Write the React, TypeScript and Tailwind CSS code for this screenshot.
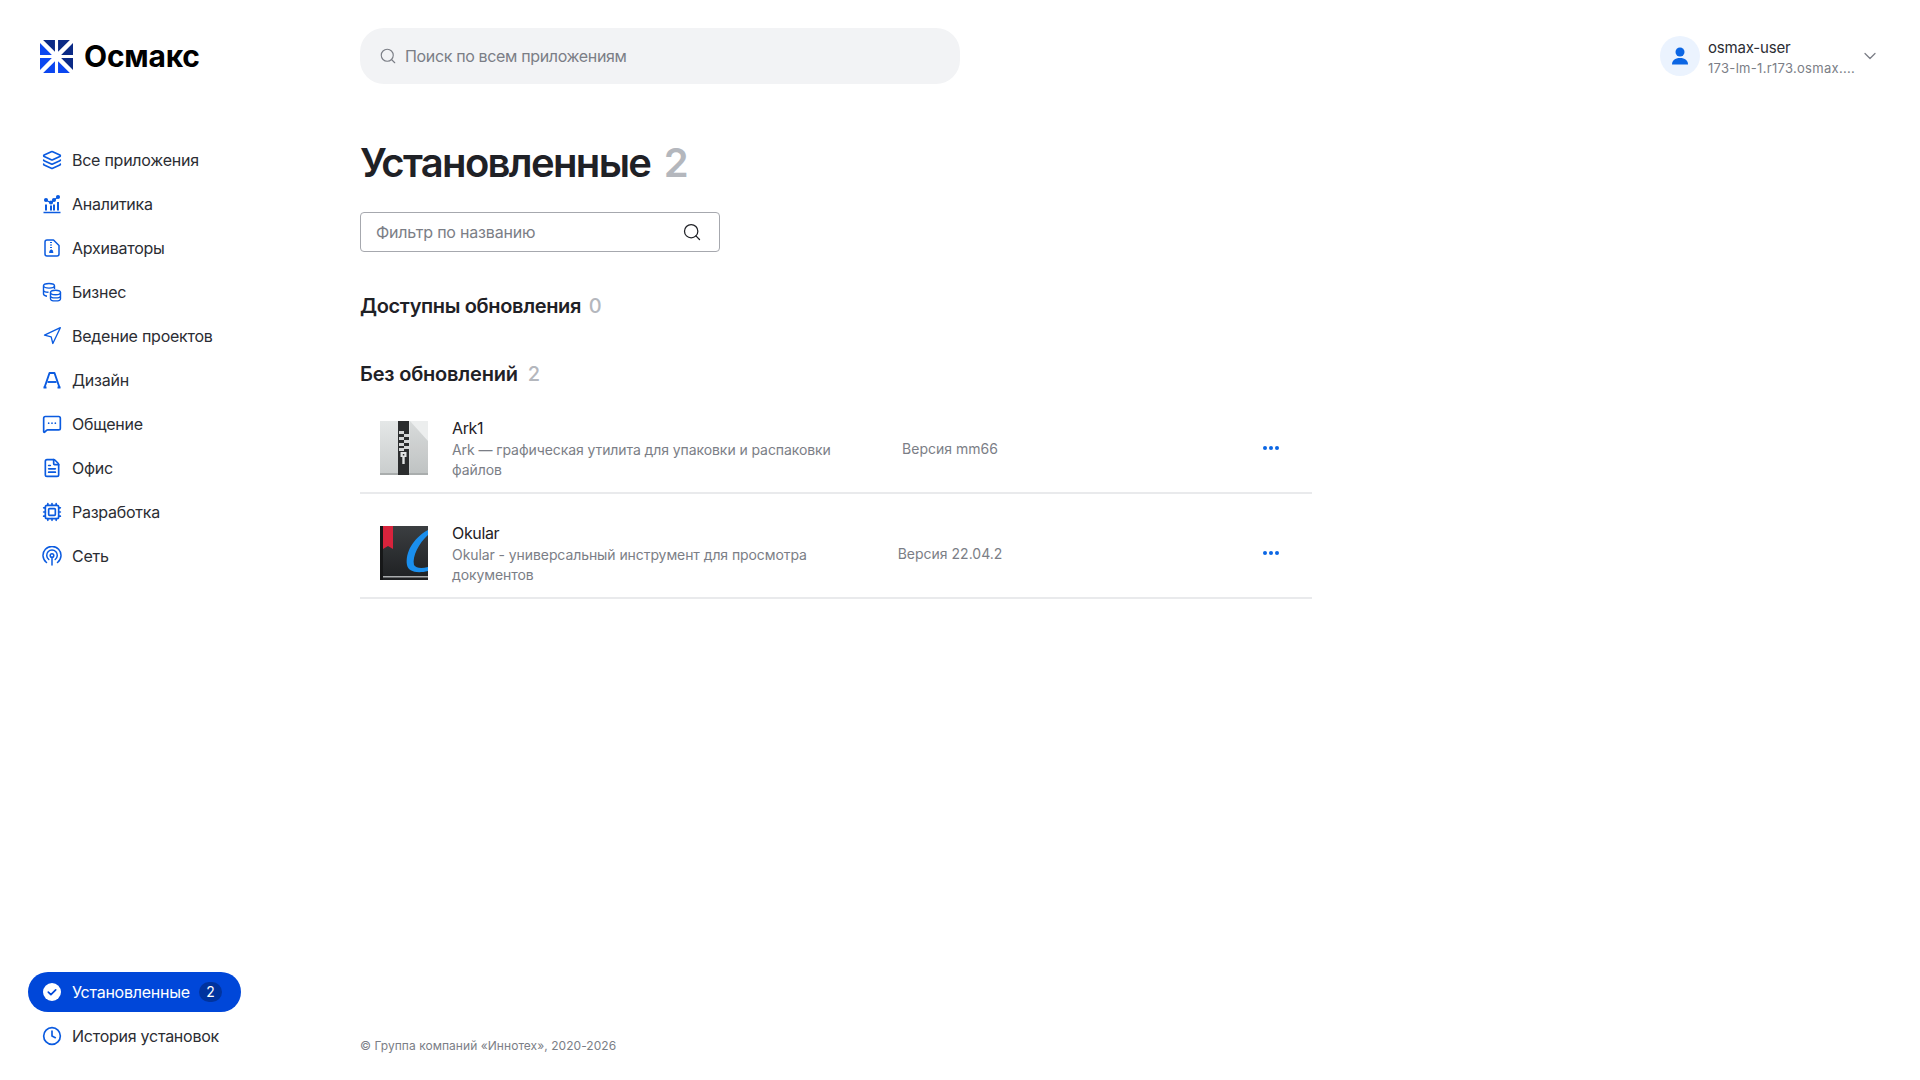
import * as React from 'react';
import {
  ChevronDown,
  Clock,
  Cpu,
  FileText,
  Layers,
  MessageSquareMore,
  Navigation,
  Search,
} from 'lucide-react';

type IconProps = { className?: string };

const Logo = () => (
  <svg width="33" height="33" viewBox="0 0 32 32" className="shrink-0">
    <path d="M3 0h11.500v11.500zM17.500 0H29L17.500 11.500zM32 3v11.500H20.500zM20.500 17.500H32V29z" fill="#0b2a86" />
    <path d="M0 3l11.500 11.500H0zM0 17.500h11.500L0 29zM3 32l11.500-11.500V32zM17.500 20.500L29 32H17.500z" fill="#0b46f0" />
  </svg>
);

const ChartIcon = ({ className }: IconProps) => (
  <svg viewBox="0 0 20 20" fill="none" stroke="currentColor" strokeWidth="1.500" className={className}>
    <path d="M1.500 18.500h17" />
    <path d="M4 16.500v-6M9 16.500v-5M12 16.500v-6M16 16.500V8" strokeWidth="2" />
    <path d="M4 6l5 3 3-3 4-3" strokeWidth="1.200" />
    <circle cx="4" cy="6" r="1.300" fill="currentColor" />
    <circle cx="9" cy="8.500" r="1.300" fill="currentColor" />
    <circle cx="12" cy="6" r="1.300" fill="currentColor" />
    <circle cx="16" cy="3" r="1.300" fill="currentColor" />
  </svg>
);

const ArchiveIcon = ({ className }: IconProps) => (
  <svg viewBox="0 0 20 20" fill="none" stroke="currentColor" strokeWidth="1.500" className={className}>
    <path d="M11.500 2H5a2 2 0 0 0-2 2v12a2 2 0 0 0 2 2h10a2 2 0 0 0 2-2V7.500z" strokeLinejoin="round" />
    <path d="M8 4.500h2M8 7h2M8 9.500h2" strokeWidth="1.200" />
    <path d="M7.500 14.500l1-2.500h1.500l1 2.500z" fill="currentColor" strokeWidth="1" />
  </svg>
);

const CoinsIcon = ({ className }: IconProps) => (
  <svg viewBox="0 0 20 20" fill="none" stroke="currentColor" strokeWidth="1.400" className={className}>
    <ellipse cx="7" cy="3.800" rx="5.500" ry="2.300" />
    <path d="M1.500 3.800v8.200c0 1 1.400 1.800 3.500 2.200M1.500 8c0 1.200 2 2.200 5 2.300M12.500 4v3" />
    <ellipse cx="13.500" cy="10.500" rx="5" ry="2.200" />
    <path d="M8.500 10.500v6.200c0 1.200 2.200 2.200 5 2.200s5-1 5-2.200v-6.200M8.500 13.700c0 1.200 2.200 2.200 5 2.200s5-1 5-2.200" />
  </svg>
);

const DesignIcon = ({ className }: IconProps) => (
  <svg viewBox="0 0 20 20" fill="none" stroke="currentColor" strokeWidth="1.900" strokeLinejoin="round" className={className}>
    <path d="M2.500 17.500L7.500 3h5l5 14.500" />
    <path d="M5.500 12h9" />
    <path d="M1.500 17.500h3M15.500 17.500h3" />
  </svg>
);

const SignalIcon = ({ className }: IconProps) => (
  <svg viewBox="0 0 20 20" fill="none" stroke="currentColor" strokeWidth="1.500" strokeLinecap="round" className={className}>
    <path d="M4.500 16.500a9 9 0 1 1 11 0" />
    <path d="M6.800 13.500a5.300 5.300 0 1 1 6.400 0" />
    <circle cx="10" cy="9.500" r="1.800" />
    <path d="M10 11.500V19" />
  </svg>
);

const CheckBadge = ({ className }: IconProps) => (
  <svg viewBox="0 0 20 20" className={className}>
    <circle cx="10" cy="10" r="9" fill="#fff" />
    <path d="M6.300 10.200l2.600 2.500 4.800-4.800" fill="none" stroke="#0047d9" strokeWidth="1.700" strokeLinecap="round" strokeLinejoin="round" />
  </svg>
);

const UserIcon = () => (
  <svg width="20" height="20" viewBox="0 0 20 20" fill="#0b66e4">
    <circle cx="10" cy="6" r="4.500" />
    <path d="M2 18.500c0-4 3-6.500 8-6.500s8 2.500 8 6.500z" />
  </svg>
);

const ArkIcon = () => (
  <svg width="48" height="54" viewBox="0 0 48 54" className="shrink-0">
    <defs>
      <linearGradient id="arkBg" x1="0" y1="0" x2="0" y2="1">
        <stop offset="0" stopColor="#e4e7e7" />
        <stop offset="1" stopColor="#c9cdcd" />
      </linearGradient>
    </defs>
    <rect width="48" height="54" fill="url(#arkBg)" />
    <path d="M30 0L48 20V0z" fill="#eceeee" />
    <path d="M30 0L48 20V52H30z" fill="#000" opacity=".05" />
    <rect y="52" width="48" height="2" fill="#a9adad" />
    <rect x="18" width="11" height="54" fill="#2b2d2e" />
    <path d="M19 10h5v3h-5zM24 13h5v3h-5zM19 16h5v3h-5zM24 19h5v3h-5zM19 22h5v3h-5zM24 25h5v3h-5zM19 27h5v3h-5z" fill="#d5d7d7" />
    <path d="M20.500 31h6v5h-1.800v7h-2.400v-7h-1.800z" fill="#e2e4e4" />
    <rect x="22.800" y="33" width="1.500" height="1.500" fill="#2b2d2e" />
  </svg>
);

const OkularIcon = () => (
  <svg width="48" height="54" viewBox="0 0 48 54" className="shrink-0">
    <defs>
      <linearGradient id="okBg" x1="0" y1="0" x2="0" y2="1">
        <stop offset="0" stopColor="#3b3e41" />
        <stop offset="1" stopColor="#1e2022" />
      </linearGradient>
      <clipPath id="okClip">
        <rect width="48" height="54" />
      </clipPath>
    </defs>
    <rect width="48" height="54" fill="url(#okBg)" />
    <rect width="3" height="54" fill="#161718" />
    <path d="M3 0h10v23l-5-3-5 3z" fill="#d8233c" />
    <rect x="3" y="50" width="45" height="1.500" fill="#a9acae" />
    <g clipPath="url(#okClip)">
      <path d="M48 4C33 12 25 27 27 39c1 6 9 9 21 6v-4c-7 2-12 1-14-2-2-9 5-22 14-30z" fill="#1a8fee" />
    </g>
  </svg>
);

const PlaneIcon = ({ className }: IconProps) => <Navigation className={className} strokeWidth={1.6} />;

const navItems: { label: string; icon: React.ComponentType<IconProps> }[] = [
  { label: 'Все приложения', icon: Layers },
  { label: 'Аналитика', icon: ChartIcon },
  { label: 'Архиваторы', icon: ArchiveIcon },
  { label: 'Бизнес', icon: CoinsIcon },
  { label: 'Ведение проектов', icon: PlaneIcon },
  { label: 'Дизайн', icon: DesignIcon },
  { label: 'Общение', icon: MessageSquareMore },
  { label: 'Офис', icon: FileText },
  { label: 'Разработка', icon: Cpu },
  { label: 'Сеть', icon: SignalIcon },
];

const apps = [
  {
    name: 'Ark1',
    desc: 'Ark — графическая утилита для упаковки и распаковки файлов',
    version: 'Версия mm66',
    icon: <ArkIcon />,
  },
  {
    name: 'Okular',
    desc: 'Okular - универсальный инструмент для просмотра документов',
    version: 'Версия 22.04.2',
    icon: <OkularIcon />,
  },
];

const NavRow = ({ label, icon: Icon }: { label: string; icon: React.ComponentType<IconProps> }) => (
  <div className="flex h-11 items-center pl-[42px] text-base tracking-[-0.25px] text-[#2b2d33]">
    <Icon className="h-5 w-5 shrink-0 text-[#0b5be0]" />
    <span className="ml-[10px]">{label}</span>
  </div>
);

const AppRow = ({ app }: { app: (typeof apps)[number] }) => (
  <div className="flex h-[105px] items-start border-b-2 border-[#e9eaec] pl-5 pt-[29px]">
    <div className="mt-[3px]">{app.icon}</div>
    <div className="ml-6 w-[400px]">
      <div className="text-base leading-5 tracking-[-0.35px] text-[#1f2126]">{app.name}</div>
      <div className="mt-[2px] text-sm leading-5 tracking-[-0.08px] text-[#7b7e86]">{app.desc}</div>
    </div>
    <div className="ml-[12px] w-[172px] pt-[21px] text-center text-sm leading-5 text-[#7b7e86]">{app.version}</div>
    <div className="ml-[227px] flex gap-[2px] pt-[28px]">
      <span className="h-1 w-1 rounded-full bg-[#0b66e4]" />
      <span className="h-1 w-1 rounded-full bg-[#0b66e4]" />
      <span className="h-1 w-1 rounded-full bg-[#0b66e4]" />
    </div>
  </div>
);

export default function App() {
  return (
    <div className="flex h-[1080px] w-full overflow-hidden bg-white font-['Inter',sans-serif] text-[#1f2126]">
      <aside className="flex w-[360px] shrink-0 flex-col">
        <div className="flex items-center gap-[11px] pl-[40px] pt-[39px]">
          <Logo />
          <span className="text-[30px] font-bold leading-[34px] tracking-[-0.2px] text-black">Осмакс</span>
        </div>
        <nav className="mt-[65px]">
          {navItems.map((item) => (
            <NavRow key={item.label} label={item.label} icon={item.icon} />
          ))}
        </nav>
        <div className="mt-auto pb-[22px]">
          <div className="flex h-11 items-center">
            <div className="ml-7 flex h-10 w-[213px] items-center rounded-full bg-[#0047d9] pl-[14px] text-base tracking-[-0.25px] text-white">
              <CheckBadge className="h-5 w-5 shrink-0" />
              <span className="ml-[10px]">Установленные</span>
              <span className="ml-[9px] flex h-5 w-[23px] items-center justify-center rounded-full bg-[#00339e] text-sm">2</span>
            </div>
          </div>
          <NavRow label="История установок" icon={Clock} />
        </div>
      </aside>

      <main className="flex min-w-0 flex-1 flex-col">
        <header className="flex items-center justify-between pr-[40px] pt-7">
          <div className="flex h-14 w-[600px] items-center rounded-3xl bg-[#f2f3f5] pl-[19px] text-base tracking-[-0.35px] text-[#7b7e86]">
            <Search className="h-[18px] w-[18px] text-[#7b7e86]" strokeWidth={1.5} />
            <span className="ml-[8px]">Поиск по всем приложениям</span>
          </div>
          <div className="flex items-center">
            <div className="flex h-10 w-10 items-center justify-center rounded-full bg-[#ebf3fe]">
              <UserIcon />
            </div>
            <div className="ml-2 w-[146px] pt-[3px]">
              <div className="text-[15px] leading-5 tracking-[-0.2px] text-[#2b2d33]">osmax-user</div>
              <div className="whitespace-nowrap text-[13px] leading-5 tracking-[0.3px] text-[#7b7e86]">173-lm-1.r173.osmax....</div>
            </div>
            <ChevronDown className="ml-[6px] h-5 w-5 text-[#7b7e86]" strokeWidth={1.5} />
          </div>
        </header>

        <h1 className="mt-[51px] text-[40px] font-semibold leading-[56px] tracking-[-1.65px] text-[#1f2126]">
          Установленные <span className="ml-[5px] tracking-normal text-[#b4b7bd]">2</span>
        </h1>

        <div className="mt-[21px] flex h-10 w-[360px] items-center justify-between rounded border border-[#a6a8ae] pl-[15px] pr-[17px] text-base tracking-[-0.2px] text-[#7b7e86]">
          <span>Фильтр по названию</span>
          <Search className="h-5 w-5 text-[#1f2126]" strokeWidth={1.5} />
        </div>

        <h2 className="mt-[40px] text-xl font-semibold leading-7 tracking-[-0.35px] text-[#1f2126]">
          Доступны обновления <span className="ml-[3px] font-medium text-[#b4b7bd]">0</span>
        </h2>

        <h2 className="mt-[40px] text-xl font-semibold leading-7 tracking-[-0.2px] text-[#1f2126]">
          Без обновлений <span className="ml-[5px] font-medium text-[#b4b7bd]">2</span>
        </h2>

        <div className="mt-[1px] w-[952px]">
          {apps.map((app) => (
            <AppRow key={app.name} app={app} />
          ))}
        </div>

        <footer className="mt-auto pb-[26px] text-xs leading-4 tracking-[0.05px] text-[#7b7e86]">© Группа компаний «Иннотех», 2020-2026</footer>
      </main>
    </div>
  );
}
